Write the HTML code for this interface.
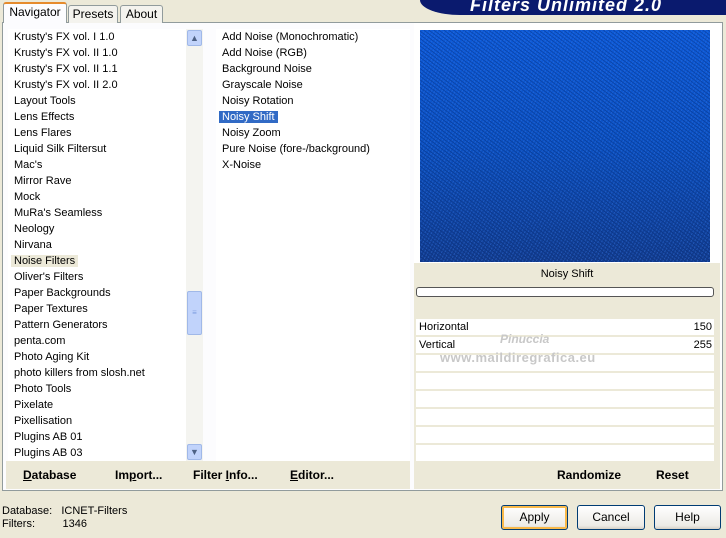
<!DOCTYPE html>
<html><head><meta charset="utf-8">
<style>
*{margin:0;padding:0;box-sizing:border-box}
body{width:726px;height:538px;background:#ece9d8;font-family:"Liberation Sans",sans-serif;font-size:11px;color:#000;position:relative;overflow:hidden}
.abs{position:absolute}
.tab{position:absolute;top:5px;height:18px;border:1px solid #919b9c;border-bottom:none;background:#f4f3ee;font-size:12px;text-align:center;line-height:16px;border-radius:3px 3px 0 0}
.panel{position:absolute;left:2px;top:22px;width:721px;height:469px;border:1px solid #919b9c;background:#fcfcfe}
.list{position:absolute;background:#fff}
.list div{height:16px;line-height:16px;white-space:nowrap;padding-left:6px}
.row{position:absolute;left:416px;width:298px;height:16px;background:#fff;line-height:16px;font-size:11px}
.btn{position:absolute;top:505px;height:25px;border:1px solid #003c74;border-radius:3px;background:linear-gradient(#fff,#ecebe6 85%,#d6d0c5);text-align:center;line-height:23px;font-size:12px}
.bb{position:absolute;top:468px;font-weight:bold;font-size:12px}
</style></head><body>
<div class="abs" style="left:420px;top:0;width:306px;height:15px;background:#0a1a6e;border-radius:0 0 0 40px / 0 0 0 15px"></div>
<div class="abs" style="left:470px;top:-5px;font-size:18px;font-weight:bold;font-style:italic;color:#fff;letter-spacing:1px">Filters Unlimited 2.0</div>
<div class="panel"></div>
<div class="tab" style="left:3px;top:2px;width:64px;height:21px;background:#fcfcfe;border-top:2px solid #e68b2c;z-index:2">Navigator</div>
<div class="tab" style="left:68px;width:50px">Presets</div>
<div class="tab" style="left:120px;width:43px">About</div>

<div class="list" style="left:8px;top:29px;width:178px;height:432px">
<div>Krusty's FX vol. I 1.0</div><div>Krusty's FX vol. II 1.0</div><div>Krusty's FX vol. II 1.1</div><div>Krusty's FX vol. II 2.0</div><div>Layout Tools</div><div>Lens Effects</div><div>Lens Flares</div><div>Liquid Silk Filtersut</div><div>Mac's</div><div>Mirror Rave</div><div>Mock</div><div>MuRa's Seamless</div><div>Neology</div><div>Nirvana</div><div><span style="background:#ece9d8;padding:0 3px;margin-left:-3px">Noise Filters</span></div><div>Oliver's Filters</div><div>Paper Backgrounds</div><div>Paper Textures</div><div>Pattern Generators</div><div>penta.com</div><div>Photo Aging Kit</div><div>photo killers from slosh.net</div><div>Photo Tools</div><div>Pixelate</div><div>Pixellisation</div><div>Plugins AB 01</div><div>Plugins AB 03</div>
</div>
<div class="abs" style="left:186px;top:29px;width:17px;height:432px;background:#f4f4f0"></div>
<div class="abs" style="left:187px;top:30px;width:15px;height:16px;background:#c1d3fb;border:1px solid #a0b8e8;border-radius:2px;color:#4d6185;font-size:9px;text-align:center;line-height:14px">&#9650;</div>
<div class="abs" style="left:187px;top:291px;width:15px;height:44px;background:#c1d3fb;border:1px solid #a0b8e8;border-radius:2px;color:#7f9ee0;font-size:8px;text-align:center;line-height:42px">&#8801;</div>
<div class="abs" style="left:187px;top:444px;width:15px;height:16px;background:#c1d3fb;border:1px solid #a0b8e8;border-radius:2px;color:#4d6185;font-size:9px;text-align:center;line-height:14px">&#9660;</div>

<div class="list" style="left:216px;top:29px;width:194px;height:432px">
<div>Add Noise (Monochromatic)</div><div>Add Noise (RGB)</div><div>Background Noise</div><div>Grayscale Noise</div><div>Noisy Rotation</div><div><span style="background:#316ac5;color:#fff;padding:0 3px;margin-left:-3px">Noisy Shift</span></div><div>Noisy Zoom</div><div>Pure Noise (fore-/background)</div><div>X-Noise</div>
</div>

<div class="abs" style="left:414px;top:23px;width:306px;height:438px;background:#ece9d8"></div>
<div class="abs" style="left:414px;top:23px;width:306px;height:240px;background:#fff"></div>
<div class="abs" style="left:420px;top:30px;width:290px;height:232px;background:linear-gradient(#0d5ad8 0%,#0b50c0 50%,#123c8e 100%)"></div>
<div class="abs" style="left:420px;top:30px;width:290px;height:232px;opacity:.35;background:repeating-linear-gradient(37deg,transparent 0 1px,#0a2a70 1px 2px,transparent 2px 3px),repeating-linear-gradient(-61deg,transparent 0 2px,#3a7ae8 2px 3px)"></div>
<div class="abs" style="left:414px;top:268px;width:306px;text-align:center;font-size:11px">Noisy Shift</div>
<div class="abs" style="left:416px;top:287px;width:298px;height:10px;border:1px solid #555;border-radius:3px;background:#fff"></div>
<div class="row" style="top:319px">&nbsp;Horizontal<span style="position:absolute;right:2px">150</span></div>
<div class="row" style="top:337px">&nbsp;Vertical<span style="position:absolute;right:2px">255</span></div>
<div class="row" style="top:355px"></div><div class="row" style="top:373px"></div><div class="row" style="top:391px"></div><div class="row" style="top:409px"></div><div class="row" style="top:427px"></div><div class="row" style="top:445px"></div>
<div class="abs" style="left:500px;top:332px;color:#c8c8c8;font-size:12px;font-weight:bold;font-style:italic">Pinuccia</div>
<div class="abs" style="left:440px;top:350px;color:#c8c8c8;font-size:13px;font-weight:bold;letter-spacing:.5px">www.maildiregrafica.eu</div>

<div class="abs" style="left:6px;top:461px;width:404px;height:28px;background:#ece9d8"></div>
<div class="abs" style="left:414px;top:461px;width:306px;height:28px;background:#ece9d8"></div>
<div class="bb" style="left:23px"><u>D</u>atabase</div>
<div class="bb" style="left:115px">Im<u>p</u>ort...</div>
<div class="bb" style="left:193px">Filter <u>I</u>nfo...</div>
<div class="bb" style="left:290px"><u>E</u>ditor...</div>
<div class="bb" style="left:557px">Randomize</div>
<div class="bb" style="left:656px">Reset</div>

<div class="abs" style="left:2px;top:505px;font-size:11px;line-height:13px">Database:&nbsp;&nbsp; ICNET-Filters<br>Filters:&nbsp;&nbsp;&nbsp;&nbsp;&nbsp;&nbsp;&nbsp;&nbsp; 1346</div>
<div class="btn" style="left:501px;width:67px;box-shadow:inset 0 0 0 2px #f8b94a">Apply</div>
<div class="btn" style="left:577px;width:68px">Cancel</div>
<div class="btn" style="left:654px;width:67px">Help</div>
</body></html>
